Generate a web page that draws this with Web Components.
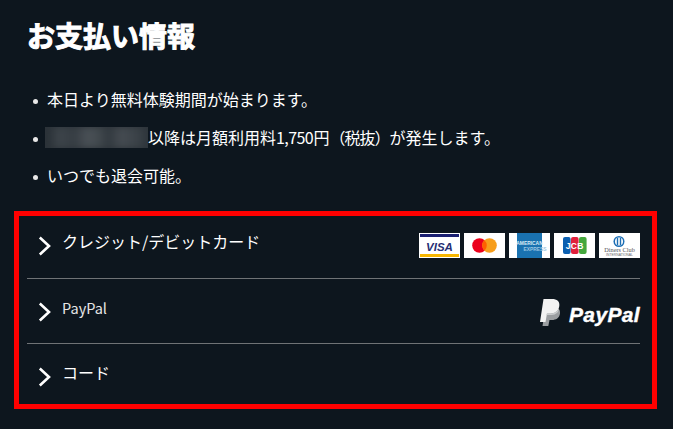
<!DOCTYPE html>
<html lang="ja"><head><meta charset="utf-8"><title>お支払い情報</title>
<style>
html,body{margin:0;padding:0;background:#0d161e;}
body{width:673px;height:429px;overflow:hidden;font-family:"Noto Sans CJK JP","Noto Sans",sans-serif;color:#fff;}
</style></head><body>
<pay-panel>
  <span slot="title">お支払い情報</span>
  <pay-bullet>本日より無料体験期間が始まります。</pay-bullet>
  <pay-bullet><blur-mask></blur-mask>以降は月額利用料<span style="letter-spacing:-.6px;margin-right:.6px">1,750</span>円<span style="letter-spacing:-1px">（税抜）</span>が発生します。</pay-bullet>
  <pay-bullet>いつでも退会可能。</pay-bullet>
  <pay-method slot="methods" first label="クレジット/デビットカード">
    <card-logo kind="visa"></card-logo><card-logo kind="mc"></card-logo><card-logo kind="amex"></card-logo><card-logo kind="jcb"></card-logo><card-logo kind="diners"></card-logo>
  </pay-method>
  <pay-method slot="methods" label="PayPal" latin><paypal-logo></paypal-logo></pay-method>
  <pay-method slot="methods" last label="コード"></pay-method>
</pay-panel>
<script>
function def(name, html, extra){
  const t=document.createElement('template');t.innerHTML=html;
  customElements.define(name,class extends HTMLElement{
    constructor(){super();this.attachShadow({mode:'open'}).appendChild(t.content.cloneNode(true));}
    connectedCallback(){extra&&extra.call(this);}
  });
}
def('pay-panel',`<style>
:host{display:block;height:429px;box-sizing:border-box;padding:16px 16px 0 14px}
h1{margin:0 0 0 13px;font-size:28px;line-height:38px;font-weight:700;-webkit-text-stroke:1px #fff;color:#fff}
ul{list-style:none;margin:26px 0 0 0;padding:0 0 0 19px;display:flex;flex-direction:column}
.box{margin-top:17px;height:198px;box-sizing:border-box;border:5px solid #f00;padding:0 12px 0 8px;display:flex;flex-direction:column}
</style><h1><slot name="title"></slot></h1><ul><slot></slot></ul><div class="box"><slot name="methods"></slot></div>`);
def('pay-bullet',`<style>
:host{display:flex;align-items:center;height:38px;font-size:16px;font-weight:400;color:#fff;white-space:nowrap}
i{width:5px;height:5px;border-radius:50%;background:#e8e8e8;margin:4px 9px 0 0;flex:none}
span{display:flex;align-items:center}
</style><i></i><span><slot></slot></span>`);
def('blur-mask',`<style>
:host{display:block;width:103px;height:21px;margin:0 0 0 -2px;flex:none;overflow:hidden;background:#2c3339}
div{height:100%;filter:blur(3px);background:linear-gradient(90deg,#262d33 0,#3d444a 14%,#363d43 28%,#4a5056 42%,#42494e 52%,#32393f 62%,#454b51 74%,#3c4349 88%,#2f363c 100%);}
</style><div></div>`);
def('pay-method',`<style>
:host{display:flex;flex:none;box-sizing:border-box;height:65px;padding:3px 0 0 11px;color:#fff}
:host([first]){height:63px;padding-top:0}
:host([last]){height:60px}
:host(:not([last])){border-bottom:1px solid #6f7376}
svg{flex:none;margin-top:20px;width:14px;height:20px}
.l{margin:14px 0 0 10px;font-size:16px;font-weight:400;line-height:22px;white-space:nowrap;flex:1}
:host([latin]) .l{margin-top:15px;font-size:14.500px;color:#e6e6e6}
.r{display:flex;gap:4px;align-items:flex-start;margin-top:17px}
</style><svg viewBox="0 0 14 20"><path d="M1.800 1.500 L11 10 L1.800 18.500" fill="none" stroke="#fff" stroke-width="2.600"/></svg><div class="l"></div><div class="r"><slot></slot></div>`,
function(){this.shadowRoot.querySelector('.l').textContent=this.getAttribute('label');});
const L={
 visa:`<rect width="41" height="25" fill="#fff"/><rect x="1" y="1" width="39" height="3" fill="#1a1f71"/><rect x="1" y="21" width="39" height="3" fill="#f7b600"/><text x="20.500" y="17.500" text-anchor="middle" font-family="Liberation Sans" font-weight="700" font-style="italic" font-size="11.500" fill="#252e74">VISA</text>`,
 mc:`<rect width="41" height="25" fill="#fff"/><circle cx="15.500" cy="12.500" r="7.300" fill="#eb001b"/><circle cx="25.500" cy="12.500" r="7.300" fill="#f79e1b"/><path d="M20.500 7.200a7.300 7.300 0 0 1 0 10.600a7.300 7.300 0 0 1 0-10.600z" fill="#ff5f00"/>`,
 amex:`<rect width="41" height="25" fill="#fff"/><rect x="8" width="25" height="25" fill="#1a72b0"/><text x="20.500" y="11.500" text-anchor="middle" font-family="Liberation Sans" font-weight="700" font-size="4.900" fill="#dcecf6">AMERICAN</text><text x="26" y="18" text-anchor="middle" font-family="Liberation Sans" font-weight="700" font-size="4.900" fill="#9cc6e2">EXPRESS</text>`,
 jcb:`<rect width="41" height="25" fill="#fff"/><rect x="9" y="4" width="7.600" height="17" rx="2" fill="#0b5fb0"/><rect x="17" y="4" width="7.600" height="17" rx="2" fill="#e0203c"/><rect x="25" y="4" width="7.600" height="17" rx="2" fill="#44a73d"/><text x="20.700" y="16" text-anchor="middle" font-family="Liberation Sans" font-weight="700" font-size="8.500" fill="#fff" letter-spacing=".3">JCB</text>`,
 diners:`<rect width="41" height="25" fill="#fff"/><circle cx="20" cy="8.500" r="5.500" fill="#1d6fb5"/><circle cx="20" cy="8.500" r="4" fill="#fff"/><rect x="17.800" y="5" width="1.400" height="7" fill="#1d6fb5"/><rect x="20.800" y="5" width="1.400" height="7" fill="#1d6fb5"/><text x="20.500" y="19" text-anchor="middle" font-family="Liberation Serif" font-size="6.300" fill="#555">Diners Club</text><text x="20.500" y="22.800" text-anchor="middle" font-family="Liberation Sans" font-size="3.400" fill="#666">INTERNATIONAL</text>`
};
customElements.define('card-logo',class extends HTMLElement{
 constructor(){super();this.attachShadow({mode:'open'});}
 connectedCallback(){this.shadowRoot.innerHTML=`<style>:host{display:block;width:41px;height:25px}svg{display:block;width:41px;height:25px}</style><svg viewBox="0 0 41 25">${L[this.getAttribute('kind')]}</svg>`;}
});
def('paypal-logo',`<style>
:host{display:flex;align-items:center;gap:7px;height:27px}
svg{display:block;width:22px;height:27px;flex:none}
span{font:italic 700 21px/27px "Liberation Sans",sans-serif;color:#fff;-webkit-text-stroke:.4px #fff;letter-spacing:.35px;margin-top:3px}
</style><svg viewBox="0 0 22 27"><path d="M5.500 8h8c4 0 7 2 6.500 6.500c-.6 4.500-4 6.500-8 6.500h-2.500l-1.200 6h-5.800z" fill="#9b9ea1"/><path d="M3.500 0h8.500c5 0 8 2.400 7.300 7c-.7 4.800-4.300 7.500-9 7.500h-3.300l-1.500 8.500h-5.500z" fill="#f2f2f2"/><path d="M6.800 14.500h3.500c3.600 0 7-1.600 8.500-4.800c.2 3.500-3 6-7 6.300h-5.300z" fill="#c9cbcd"/></svg><span>PayPal</span>`);
</script>
</body></html>
